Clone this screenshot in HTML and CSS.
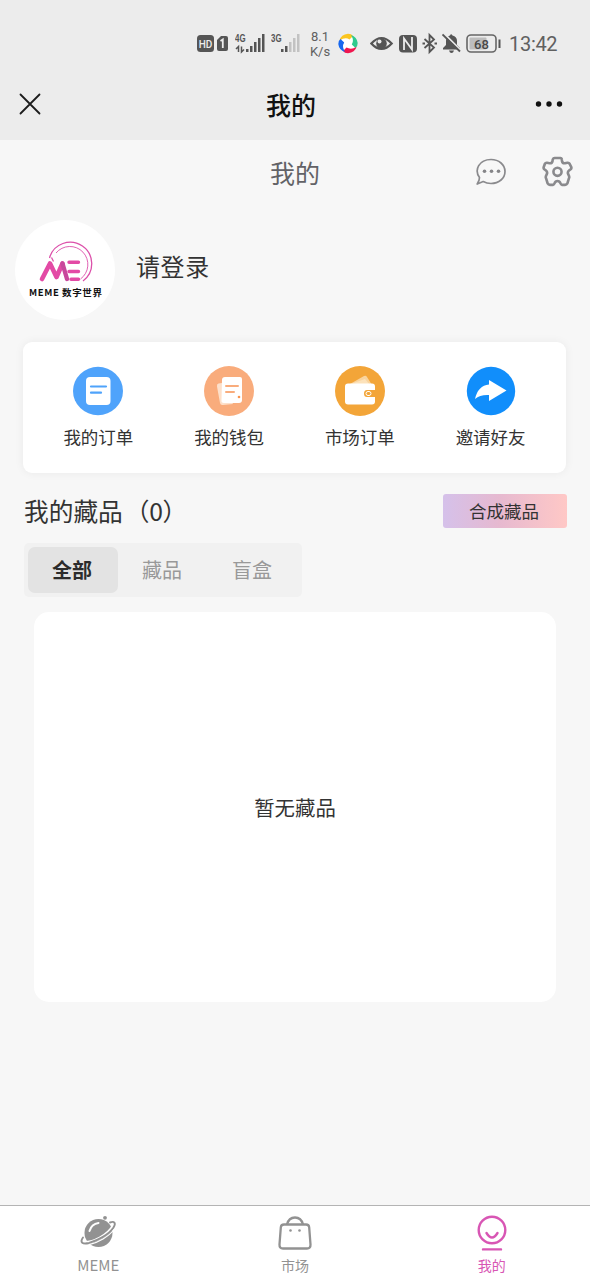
FILE: index.html
```html
<!DOCTYPE html>
<html lang="zh-CN">
<head>
<meta charset="utf-8">
<title>我的</title>
<link rel="stylesheet" href="styles.css">
</head>
<body>
<div class="top">
  <div class="status">
    <svg class="w17" viewBox="197 30 17 28"><rect x="197" y="35" width="17" height="17" rx="3.500" fill="#555"/><text x="205.500" y="47.500" class="hd">HD</text></svg>
    <svg class="w11 gap3" viewBox="217 30 11 28"><path d="M221 36h5q2 0 2 2v11q0 2-2 2h-7q-2 0-2-2v-9z" fill="#555"/><path d="M220.500 41l2.300-1.500V48" fill="none" stroke="#ececec" stroke-width="1.800"/></svg>
    <svg class="w30 gap7" viewBox="235 30 30 28"><text x="235" y="42" class="net" textLength="10.500" lengthAdjust="spacingAndGlyphs">4G</text><g fill="#555"><rect x="246" y="49" width="2.500" height="3"/><rect x="250" y="46" width="2.500" height="6"/><rect x="254" y="42" width="2.500" height="10"/><rect x="258" y="38" width="2.500" height="14"/><rect x="262" y="34" width="2.500" height="18"/></g><path d="M238.500 52v-5.500l-2.500 2.500M241.500 46.500V52l2.500-2.500" fill="none" stroke="#555" stroke-width="1.500"/></svg>
    <svg class="w30 gap6" viewBox="271 30 30 28"><text x="271" y="42" class="net" textLength="10.500" lengthAdjust="spacingAndGlyphs">3G</text><g fill="#555"><rect x="281" y="49" width="2.500" height="3"/><rect x="285" y="46" width="2.500" height="6"/></g><g fill="#c2c2c2"><rect x="289" y="42" width="2.500" height="10"/><rect x="293" y="38" width="2.500" height="14"/><rect x="297" y="34" width="2.500" height="18"/></g></svg>
    <div class="speed"><span>8.1</span><span>K/s</span></div>
    <svg class="w20 gap8" viewBox="338 30 20 28"><circle cx="348" cy="43.500" r="7.500" fill="#fff"/><path d="M339.500 40.500q1.500-6 8.500-6.700 3.500 0 5 2.200l-3.500 3.500q-4-3-10 1z" fill="#fbc51f"/><path d="M351 35q6 2 6.700 8 0 3.500-2.200 5l-3.700-3.500q2.700-4-.8-9.500z" fill="#2fca8d"/><path d="M356.500 47q-1.500 5.500-8.500 6.300-3.500 0-5-2.200l3.500-3.600q4.500 2.500 10-.5z" fill="#f0164e"/><path d="M345 52q-6-2-6.700-8 0-3.500 2.200-5l3.700 3.500q-2.700 4 .8 9.500z" fill="#1767ef"/></svg>
    <svg class="w24 gap12" viewBox="370 30 24 28"><path d="M371.300 43.500Q381.500 32.500 391.700 43.500Q381.500 54.500 371.300 43.500z" fill="#ececec" stroke="#555" stroke-width="2.200"/><circle cx="381.500" cy="43.500" r="5.300" fill="#555"/><circle cx="379.500" cy="41.500" r="2" fill="#ececec"/></svg>
    <svg class="w18 gap5" viewBox="399 30 18 28"><rect x="399" y="35" width="18" height="17.500" rx="4" fill="#555"/><path d="M404 50V38.500l8 11V37" fill="none" stroke="#ececec" stroke-width="1.800"/></svg>
    <svg class="w15 gap5" viewBox="422 30 15 28"><path d="M424.500 39l9.500 8.500-4.500 4.500V35l4.500 4.500-9.500 8.500" fill="none" stroke="#555" stroke-width="1.800"/><path d="M422.500 43.500h2.500M434.500 43.500h2.500" stroke="#555" stroke-width="2"/></svg>
    <svg class="w20 gap5" viewBox="442 30 20 28"><path d="M443 49.500v-1.500l3-3v-4q0-4.500 4-5.500 1-2.500 2.500 0 4.500 1 4.500 5.500v4l3 3v1.500z" fill="#555"/><path d="M449 50.500h5q-.8 2.500-2.500 2.500t-2.500-2.500" fill="#555"/><path d="M444.500 34l17 17" stroke="#ececec" stroke-width="1.800"/><path d="M442.500 34.500l17.500 17" stroke="#555" stroke-width="1.800"/></svg>
    <svg class="w36 gap4" viewBox="466 30 36 28"><rect x="467" y="35" width="29" height="17" rx="4" fill="none" stroke="#666" stroke-width="1.600"/><rect x="469.500" y="37.500" width="17" height="12" rx="1" fill="#bdbdbd"/><rect x="498.500" y="39.500" width="2" height="8.500" fill="#555"/><text x="481.500" y="48.500" class="pct">68</text></svg>
    <span class="time">13:42</span>
  </div>
  <div class="titlebar">
    <svg class="close" viewBox="0 0 22 22"><path d="M1.500 1.500l19 19M20.500 1.500l-19 19" stroke="#1c1c1c" stroke-width="1.800" stroke-linecap="round"/></svg>
    <h1>我的</h1>
    <svg class="more" viewBox="0 0 28 8"><circle cx="3.500" cy="4" r="2.700"/><circle cx="14" cy="4" r="2.700"/><circle cx="24.500" cy="4" r="2.700"/></svg>
  </div>
</div>
<div class="subbar">
  <span></span>
  <h2>我的</h2>
  <div class="tools">
    <svg class="chat" viewBox="0 0 32 28" fill="none" stroke="#8a8a8d" stroke-width="1.700"><path d="M4.500 19.500C-1 12 4 1.500 16 1.500c8 0 14 5.300 14 12s-6 12-14 12c-3 0-5.500-.7-7.800-2L2.200 26c1.600-2.300 2.300-4 2.300-6.500z" stroke-linejoin="round"/><g fill="#858588" stroke="none"><circle cx="9.500" cy="13.300" r="1.800"/><circle cx="16.500" cy="13.300" r="1.800"/><circle cx="23.500" cy="13.300" r="1.800"/></g></svg>
    <svg class="gear" viewBox="0 0 32 32" fill="none" stroke="#8a8a8d" stroke-width="2.700" stroke-linejoin="round"><path d="M13 2h6q1.300 0 1.400 1.500l.3 2q.6 2.300 3 2l2.600-.5q1.500-.2 2.200 1l1.700 3.400q.5 1.400-.6 2.300l-1.700 1.300q-1.800 1.500-.9 3.600l1 2.400q.4 1.400-.3 2.300l-1.500 5q-.8 1.500-2.400 1.500h-3q-1.300-.2-1.700-1.500-.9-2.500-3.100-2.500t-3.100 2.500q-.4 1.300-1.700 1.500h-3q-1.600 0-2.400-1.500l-1.500-5q-.7-.9-.3-2.300l1-2.400q.9-2.100-.9-3.600l-1.700-1.300q-1.100-.9-.6-2.300L3 8q.7-1.200 2.200-1l2.600.5q2.400.3 3-2l.3-2Q11.700 2 13 2z"/><circle cx="16" cy="16.300" r="4.200"/></svg>
  </div>
</div>
<div class="profile">
  <div class="avatar">
    <svg viewBox="0 0 100 100"><g fill="none" stroke="#dc50aa"><path d="M34.500 38A21.500 21.500 0 1 1 68 61" stroke-width="1.300"/><path d="M41 33A18 18 0 1 1 65.500 59" stroke-width=".9"/><path d="M36.500 37.500l2 4" stroke-width="1.200"/></g><path d="M54 42.300h9.500M54 51.500h9.500M56 59.300h7.500" fill="none" stroke="#e34aa5" stroke-width="3.400" stroke-linecap="round"/><path d="M27 59l8-15.500L41.500 57 47.500 43.500" fill="none" stroke="#e34aa5" stroke-width="4.600" stroke-linecap="round" stroke-linejoin="round"/><path d="M47.500 43.500L52 59" fill="none" stroke="#c8489c" stroke-width="4.400" stroke-linecap="round"/><text x="14" y="75.500" class="brand" textLength="73">MEME 数字世界</text></svg>
  </div>
  <span class="login">请登录</span>
</div>
<div class="actions">
  <div class="action"><svg viewBox="0 0 50 50"><ellipse cx="25" cy="25" rx="25" ry="24.200" fill="#4fa3fb"/><rect x="13" y="11" width="24.500" height="28" rx="4" fill="#fff"/><path d="M18 20.500h15M18 26.700h10" stroke="#4fa3fb" stroke-width="2.200" stroke-linecap="round"/></svg><span>我的订单</span></div>
  <div class="action"><svg viewBox="0 0 50 50"><circle cx="25" cy="25" r="25" fill="#f9ac7c"/><path d="M18 17l-3.500.5q-2 .7-1.500 3l3 16.500q.5 2.500 3 2l10-1z" fill="#fde0ca"/><path d="M21 11h15q2 0 2 2v21q0 3-3 3H20q-3 0-2.500-3L18 14q0-3 3-3z" fill="#fff"/><path d="M22 20h12M22 26h8" stroke="#f9ac7c" stroke-width="2" stroke-linecap="round"/><circle cx="35" cy="31" r="1.300" fill="#f9944e"/></svg><span>我的钱包</span></div>
  <div class="action"><svg viewBox="0 0 50 50"><circle cx="25" cy="25" r="25" fill="#f3a538"/><path d="M15 18l14-8q2-1 3 1l5 8z" fill="#f9d39c"/><path d="M17 17.500l13-4.500 5 6z" fill="#fce2bb"/><rect x="10" y="17.500" width="30" height="21" rx="3" fill="#fff"/><path d="M40 24h-8q-3 0-3 3.500t3 3.500h8z" fill="#f3a538"/><rect x="31" y="25.500" width="5" height="4" rx="2" fill="#f3a538" stroke="#fff"/></svg><span>市场订单</span></div>
  <div class="action"><svg viewBox="0 0 50 50"><circle cx="25" cy="25" r="24.200" fill="#118efb"/><path d="M9 33q3-13.500 14-14.500v-4.500l17.500 10.500L23 35v-6Q14 28.500 9 33z" fill="#fff"/></svg><span>邀请好友</span></div>
</div>
<div class="collection-head"><h3>我的藏品<span class="count">（0）</span></h3><button class="compose">合成藏品</button></div>
<div class="tabs"><span class="tab on">全部</span><span class="tab">藏品</span><span class="tab">盲盒</span></div>
<div class="empty">暂无藏品</div>
<div class="nav">
  <div class="nav-item"><svg viewBox="0 0 40 36"><circle cx="20.500" cy="18" r="14" fill="#929292"/><path d="M11.500 16q2-7 9-8" fill="none" stroke="#fff" stroke-width="2" stroke-linecap="round"/><path d="M5 27.500C16 28 30 20 35.500 10.500" fill="none" stroke="#fff" stroke-width="3"/><path d="M5 22.500C1.500 27.500 4.500 29.500 11 28 20 25.500 31 19.500 35.500 12.500c3-5 .5-6.500-3.500-5" fill="none" stroke="#929292" stroke-width="1.900" stroke-linecap="round"/><path d="M11 29.700C20 27.500 31 21.500 36 14.500" fill="none" stroke="#fff" stroke-width="1.200"/><circle cx="27" cy="2.800" r="1.900" fill="#929292"/></svg><span class="latin">MEME</span></div>
  <div class="nav-item"><svg viewBox="0 0 40 36" fill="none" stroke="#929292" stroke-width="2.300"><path d="M9 9.500h22q3 0 3.200 3l1.300 17q.2 4-3.500 4H8q-3.700 0-3.500-4l1.300-17q.2-3 3.200-3z"/><path d="M12 9.500c1-4 4-7 8-7s7 3 8 7"/><g fill="#929292" stroke="none"><circle cx="15.500" cy="15.500" r="1.300"/><circle cx="24.500" cy="15.500" r="1.300"/></g></svg><span>市场</span></div>
  <div class="nav-item active"><svg viewBox="0 0 40 36" fill="none" stroke="#d856b4" stroke-width="2.400" stroke-linecap="round"><circle cx="20" cy="15" r="13.300"/><path d="M14.500 18q5.500 9 11 0M11 34.400h18"/></svg><span>我的</span></div>
</div>
</body>
</html>
```
FILE: styles.css
```css
* { box-sizing: border-box; }
body {
  margin: 0;
  height: 1278px;
  display: flex;
  flex-direction: column;
  background: #f7f7f7;
  color: #333;
  font-family: "Noto Sans CJK SC", sans-serif;
}
h1, h2, h3 { margin: 0; font-weight: 400; }
svg { display: block; flex: none; }
.top { height: 140px; background: #ececec; }
.status { height: 69px; padding: 30px 0 0 197px; display: flex; align-items: flex-start; color: #606060; }
.status svg { height: 28px; }
.w11 { width: 11px; } .w15 { width: 15px; } .w17 { width: 17px; } .w18 { width: 18px; }
.w20 { width: 20px; } .w24 { width: 24px; } .w30 { width: 30px; } .w36 { width: 36px; }
.gap3 { margin-left: 3px; } .gap4 { margin-left: 4px; } .gap5 { margin-left: 5px; }
.gap6 { margin-left: 6px; } .gap7 { margin-left: 7px; } .gap8 { margin-left: 8px; } .gap12 { margin-left: 12px; }
.hd { font: 500 10px Roboto, sans-serif; fill: #ececec; text-anchor: middle; }
.net { font: 700 10px "Liberation Sans", sans-serif; fill: #555; }
.pct { font: 500 13px Roboto, sans-serif; fill: #484848; text-anchor: middle; }
.speed { width: 20px; margin-left: 9px; margin-top: -1px; display: flex; flex-direction: column; align-items: center; font: 13px/15px Roboto, sans-serif; }
.time { margin-left: 7px; font: 20px/28px Roboto, sans-serif; letter-spacing: -.3px; }
.titlebar { height: 70px; padding: 0 27px 0 19px; display: grid; grid-template-columns: 1fr auto 1fr; align-items: center; }
.titlebar h1 { font-size: 25px; line-height: 70px; font-weight: 500; color: #111; margin: 0 -7px; }
.close { width: 22px; height: 22px; }
.more { width: 28px; height: 8px; justify-self: end; fill: #111; }
.subbar { height: 66px; padding: 0 17px 3px; display: grid; grid-template-columns: 1fr auto 1fr; align-items: center; }
.subbar h2 { font-size: 25px; color: #626266; }
.tools { justify-self: end; display: flex; align-items: center; gap: 35px; }
.chat { width: 32px; height: 28px; }
.gear { width: 31px; height: 31px; }
.profile { height: 136px; padding: 14px 15px; display: flex; align-items: flex-start; }
.avatar { width: 100px; height: 100px; border-radius: 50%; background: #fff; overflow: hidden; }
.brand { font: 700 9.500px "Noto Sans CJK SC", sans-serif; fill: #111; }
.login { font-size: 24px; line-height: 36px; margin: 28px 0 0 21px; letter-spacing: .6px; }
.actions {
  height: 131px;
  margin: 0 24px 0 23px;
  padding: 24px 10px 0;
  display: grid;
  grid-template-columns: repeat(4, 1fr);
  background: #fff;
  border-radius: 9px;
  box-shadow: 0 0 10px rgba(0, 0, 0, .06);
}
.action { display: flex; flex-direction: column; align-items: center; font-size: 17.500px; line-height: 26px; gap: 8px; }
.action svg { width: 50px; height: 50px; }
.collection-head { height: 34px; margin: 21px 23px 0 24px; display: flex; align-items: center; justify-content: space-between; }
.collection-head h3 { font-size: 24.700px; line-height: 34px; margin-top: -2px; }
.count { margin-left: 2px; letter-spacing: -.3px; }
.compose { width: 124px; height: 34px; padding: 0 2px 0 0; border: 0; border-radius: 3px; background: linear-gradient(90deg, #d5c1ea, #e6b9d0 45%, #ffc8c6); font: 17.500px/34px "Noto Sans CJK SC", sans-serif; color: #333; }
.tabs { width: 278px; height: 54px; margin: 15px 0 0 24px; padding: 4px; display: flex; background: #f1f1f1; border-radius: 5px; }
.tab { width: 90px; padding-right: 2px; line-height: 46px; text-align: center; font-size: 20px; color: #999; border-radius: 7px; }
.tab.on { background: #e3e3e3; color: #2c2c2c; font-weight: 700; }
.empty { height: 390px; margin: 15px 34px 0; display: flex; align-items: center; justify-content: center; background: #fff; border-radius: 15px; font-size: 20.400px; }
.nav { height: 73px; margin-top: auto; display: grid; grid-template-columns: repeat(3, 1fr); background: #fff; border-top: 1px solid #b4b4b4; }
.nav-item { display: flex; flex-direction: column; align-items: center; padding-top: 9px; font-size: 14px; line-height: 22px; gap: 3px; color: #929292; }
.nav-item svg { width: 40px; height: 36px; }
.nav-item.active { color: #d856b4; }
.latin { font-size: 15px; }
```
